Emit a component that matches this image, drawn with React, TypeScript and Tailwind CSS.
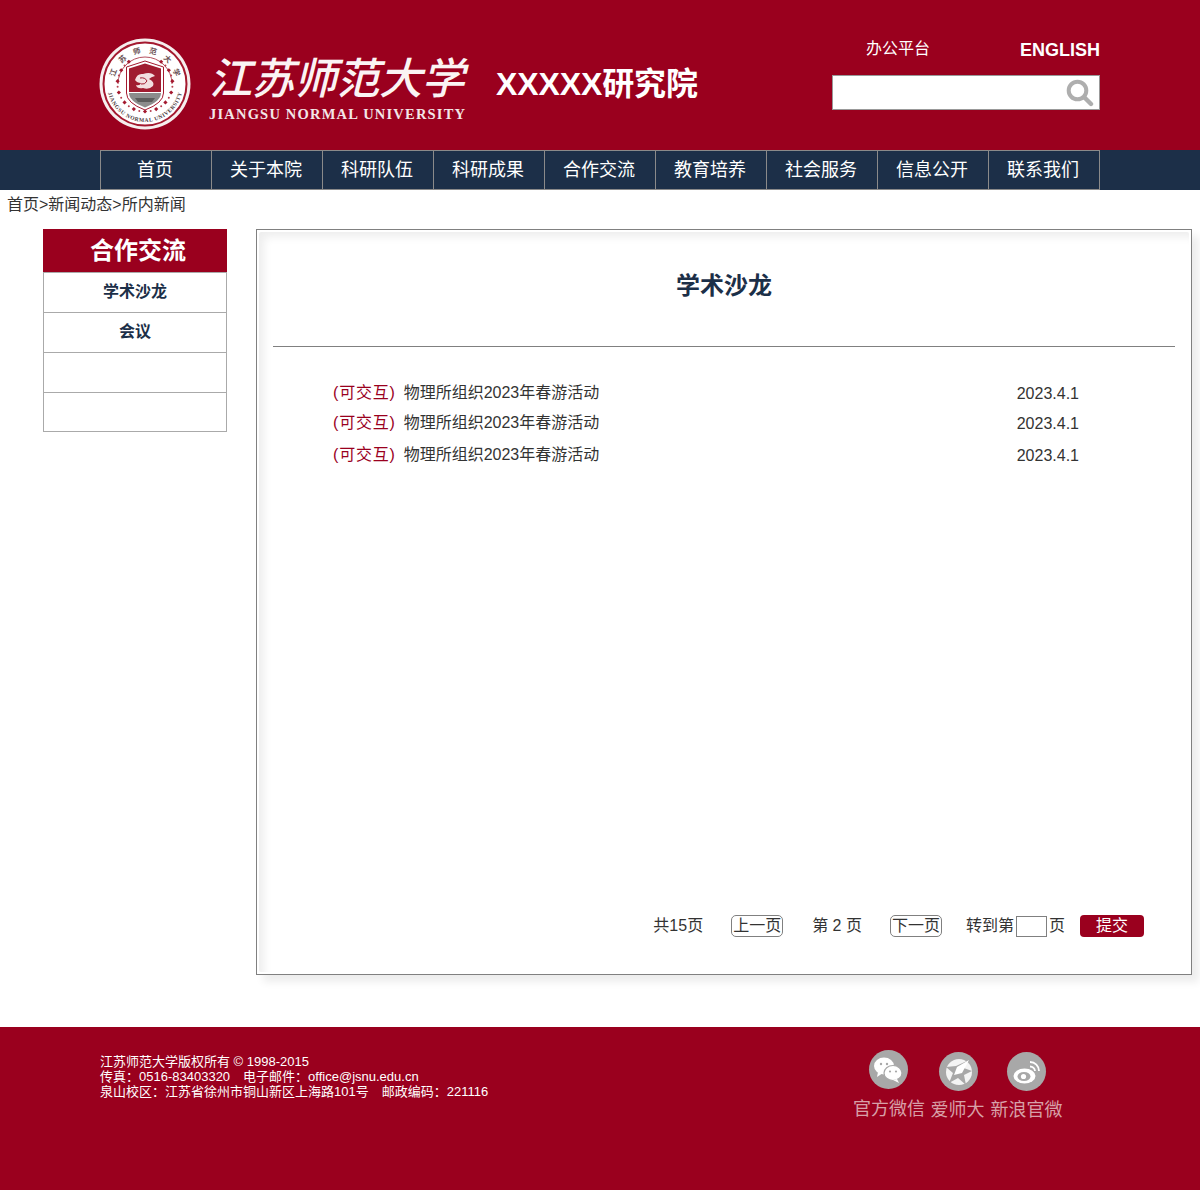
import React from "react";

const RED = "bg-[#9a001e]";
const nav = ["首页", "关于本院", "科研队伍", "科研成果", "合作交流", "教育培养", "社会服务", "信息公开", "联系我们"];
const rows = ["mt-0", "mt-[10px]", "mt-[12px]"];
const sealChars = ["江", "苏", "师", "范", "大", "学"];

function Seal() {
  const c = 46;
  const beads = Array.from({ length: 25 }, (_, i) => {
    const a = (Math.PI * (i - 12)) / 15;
    return { x: c + 27.5 * Math.sin(a), y: c + 27.5 * Math.cos(a), big: i % 2 === 0 };
  });
  return (
    <svg width="92" height="92" viewBox="0 0 92 92" className="shrink-0">
      <defs>
        <path id="sealBottom" d="M 8 46 A 38 38 0 0 0 84 46" />
      </defs>
      <circle cx={c} cy={c} r="45.5" fill="#f6eeee" />
      <circle cx={c} cy={c} r="41.5" fill="#fff" stroke="#a4192f" strokeWidth="2" />
      <path d="M 19 46 A 27 27 0 0 1 73 46" fill="none" stroke="#b5505f" strokeWidth="1" />
      {sealChars.map((ch, i) => {
        const deg = -70 + i * 28;
        const rad = (deg * Math.PI) / 180;
        const x = c + 34 * Math.sin(rad);
        const y = c - 34 * Math.cos(rad);
        return (
          <text key={ch} x={x} y={y + 3} textAnchor="middle" fontSize="7.5" fontWeight="700" fill="#6a5053" transform={`rotate(${deg} ${x} ${y})`}>
            {ch}
          </text>
        );
      })}
      <text fontSize="5.6" fontWeight="700" fill="#4c3a3d" fontFamily="Liberation Serif, serif" letterSpacing="0.55">
        <textPath href="#sealBottom" startOffset="50%" textAnchor="middle">JIANGSU NORMAL UNIVERSITY</textPath>
      </text>
      {beads.map((b, i) =>
        b.big ? (
          <rect key={i} x={b.x - 1.5} y={b.y - 1.5} width="3" height="3" fill="#a4192f" transform={`rotate(45 ${b.x} ${b.y})`} />
        ) : (
          <circle key={i} cx={b.x} cy={b.y} r="1" fill="#b6404f" />
        ),
      )}
      <path d="M27.5 29 L46 23 L64.5 29 L64.5 55 Q64.5 65 46 72 Q27.5 65 27.5 55 Z" fill="#fff" stroke="#a4192f" strokeWidth="1" />
      <path d="M30 30.5 L46 25.5 L62 30.5 L62 54 L30 54 Z" fill="#a01c30" />
      <path d="M30 55 L62 55 Q62 63 46 69.5 Q30 63 30 55 Z" fill="#8c8c8c" />
      <path d="M36 60 L56 60 L53 64 L39 64 Z" fill="#5c5c5c" />
      <path d="M36 42 Q38 35 44 36 Q52 33 56 38 Q52 39 50 41 Q56 44 54 48 Q50 52 44 50 Q38 51 37 47 Q41 48 42 45 Q38 45 36 42 Z" fill="#f2dfe0" />
      <path d="M41 40 Q46 39 48 43 Q46 47 42 46" fill="none" stroke="#a01c30" strokeWidth="1" />
    </svg>
  );
}

function SearchIcon() {
  return (
    <svg width="28" height="28" viewBox="0 0 28 28" fill="none" stroke="#aeaeae">
      <circle cx="11.5" cy="11.5" r="8.8" strokeWidth="4" />
      <path d="M18.5 18.5 L25 25" strokeWidth="4.4" strokeLinecap="round" />
    </svg>
  );
}

function Social({ label, className, iconClass, children }: { label: string; className: string; iconClass: string; children: React.ReactNode }) {
  return (
    <div className={`flex flex-col items-center ${className}`}>
      <div className={`flex h-[39px] w-[39px] items-center justify-center rounded-full bg-[#a8a8a8] ${iconClass}`}>{children}</div>
      <div className="mt-[7px] whitespace-nowrap text-[18px] leading-[24px] text-[#d8a0a8]">{label}</div>
    </div>
  );
}

export default function App() {
  return (
    <div className="h-[1190px] w-[1200px] overflow-hidden bg-white font-['Liberation_Sans','Noto_Sans_CJK_SC',sans-serif] text-[16px] text-[#333]">
      <header className={`${RED} flex h-[150px] items-start pl-[99px] pr-[100px]`}>
        <div className="mt-[38px]"><Seal /></div>
        <div className="ml-[18px] mt-[48px] w-[262px]">
          <div className="whitespace-nowrap font-['Noto_Sans_CJK_SC',serif] text-[43px] font-medium italic leading-[54px] tracking-[-0.5px] text-[#fbf3f3]">江苏师范大学</div>
          <div className="mt-[4px] whitespace-nowrap font-['Liberation_Serif',serif] text-[14.5px] font-bold leading-[16px] tracking-[1.2px] text-[#f3e6e7]">JIANGSU NORMAL UNIVERSITY</div>
        </div>
        <div className="ml-[25px] mt-[62px] whitespace-nowrap text-[32px] font-bold leading-[44px] tracking-[-0.1px] text-white">XXXXX研究院</div>
        <div className="ml-auto mt-[36px] w-[268px]">
          <div className="flex items-start text-white">
            <span className="ml-[34px] mt-px text-[16px] leading-[24px]">办公平台</span>
            <span className="ml-auto text-[18px] font-bold leading-[28px]">ENGLISH</span>
          </div>
          <div className="mt-[11px] flex h-[35px] items-center justify-end border border-[#999] bg-white pr-[5px]">
            <SearchIcon />
          </div>
        </div>
      </header>

      <nav className="h-[40px] bg-[#1c2f48] pl-[100px]">
        <ul className="flex h-[40px] w-[1000px] border border-r-0 border-[#8a8a8a]">
          {nav.map((n) => (
            <li key={n} className="flex h-full w-[111px] items-center justify-center border-r border-[#8a8a8a] pr-[2px] text-[18px] text-white">{n}</li>
          ))}
        </ul>
      </nav>

      <div className="h-[28px] pl-[7px] text-[16px] leading-[30px] text-[#333]">首页&gt;新闻动态&gt;所内新闻</div>

      <div className="mt-[11px] flex items-start pl-[43px]">
        <aside className="w-[184px]">
          <div className={`${RED} flex h-[43px] items-center justify-center pl-[6px] text-[24px] font-bold text-white`}>合作交流</div>
          <div className="border border-t-0 border-[#aaa]">
            <div className="flex h-[41px] items-start justify-center border-y border-y-[#aaa] pt-[8px] text-[16px] font-bold leading-[22px] text-[#1c2f48]">学术沙龙</div>
            <div className="flex h-[40px] items-start justify-center border-b border-b-[#aaa] pt-[8px] text-[16px] font-bold leading-[22px] text-[#1c2f48]">会议</div>
            <div className="h-[40px] border-b border-b-[#aaa]"></div>
            <div className="h-[38px]"></div>
          </div>
        </aside>

        <main className="ml-[29px] h-[746px] w-[936px] border border-[#808080] bg-white p-[2px] shadow-[7px_7px_8px_#ededed]">
          <div className="flex h-full flex-col rounded-[2px] px-[14px] shadow-[inset_6px_6px_8px_-1px_#eeeeee]">
            <h1 className="h-[114px] pt-[37px] text-center text-[24px] font-bold leading-[34px] text-[#1c2f48]">学术沙龙</h1>
            <div className="h-px bg-[#808080]"></div>
            <div className="mt-[36px] pl-[60px] pr-[96px]">
              {rows.map((m, i) => (
                <div key={i} className={`flex h-[20px] items-center justify-between text-[16px] ${m}`}>
                  <div><span className="tracking-[0.8px] text-[#9a001e]">(可交互)</span><span className="ml-[8px]">物理所组织2023年春游活动</span></div>
                  <span className="mt-[2px]">2023.4.1</span>
                </div>
              ))}
            </div>
            <div className="mb-[35px] mt-auto flex h-[22px] items-center justify-end whitespace-nowrap pr-[31px] text-[16px]">
              <span>共15页</span>
              <span className="ml-[28px] h-[22px] rounded-[5px] border border-[#808080] px-[1px] leading-[20px]">上一页</span>
              <span className="ml-[29px]">第 2 页</span>
              <span className="ml-[28px] h-[22px] rounded-[5px] border border-[#808080] px-[1px] leading-[20px]">下一页</span>
              <span className="ml-[24px]">转到第</span>
              <input aria-label="页码" className="ml-[2px] h-[21px] w-[31px] border border-[#808080] bg-white" />
              <span className="ml-[2px] mr-[1px]">页</span>
              <span className={`${RED} ml-[14px] h-[22px] w-[64px] rounded-[4px] text-center leading-[22px] text-white`}>提交</span>
            </div>
          </div>
        </main>
      </div>

      <footer className={`${RED} mt-[52px] flex h-[163px] pl-[100px] text-white`}>
        <div className="mt-[27px] w-[600px] text-[13px] leading-[15px]">
          <div>江苏师范大学版权所有 © 1998-2015</div>
          <div>传真：0516-83403320<span className="ml-[13px]">电子邮件：office@jsnu.edu.cn</span></div>
          <div>泉山校区：江苏省徐州市铜山新区上海路101号<span className="ml-[13px]">邮政编码：221116</span></div>
        </div>
        <div className="ml-[154px] mt-[24px] flex items-start gap-[7px]">
          <Social label="官方微信" className="w-[70px]" iconClass="mr-[2px] -mt-px mb-px">
            <svg width="30" height="28" viewBox="0 0 30 28" fill="#fff">
              <ellipse cx="11" cy="10" rx="10" ry="8.5" />
              <path d="M5 16 L4 21 L10 17 Z" />
              <ellipse cx="20" cy="17" rx="9" ry="7.5" stroke="#a8a8a8" strokeWidth="1.2" />
              <path d="M24 23 L26 27 L20 24 Z" />
              <circle cx="8" cy="8" r="1.2" fill="#a8a8a8" />
              <circle cx="14" cy="8" r="1.2" fill="#a8a8a8" />
              <circle cx="17" cy="15.5" r="1.1" fill="#a8a8a8" />
              <circle cx="23" cy="15.5" r="1.1" fill="#a8a8a8" />
            </svg>
          </Social>
          <Social label="爱师大" className="mt-[1px] w-[53px]" iconClass="ml-[2px]">
            <svg width="30" height="30" viewBox="0 0 30 30" fill="#fff">
              <circle cx="15" cy="15" r="13" fill="#f4f4f4" />
              <path d="M25 3 L17 10 L28 14 L20 18 L22 28 L14 21 L5 26 L9 16 L2 10 L12 9 Z" fill="#a8a8a8" />
              <path d="M25 3 L13 10 L10 18 L18 16 Z" fill="#fff" />
            </svg>
          </Social>
          <Social label="新浪官微" className="mt-[1px] w-[71px]" iconClass="">
            <svg width="30" height="30" viewBox="0 0 30 30" fill="none">
              <ellipse cx="12.5" cy="19" rx="11" ry="7.5" fill="#fff" />
              <ellipse cx="12" cy="19.5" rx="6.5" ry="4.5" fill="#a8a8a8" />
              <circle cx="11.5" cy="19.5" r="2.6" fill="#fff" />
              <path d="M18 5 A9 9 0 0 1 27 14" stroke="#fff" strokeWidth="1.8" />
              <path d="M18 9.5 A5 5 0 0 1 23 14" stroke="#fff" strokeWidth="1.8" />
            </svg>
          </Social>
        </div>
      </footer>
    </div>
  );
}
